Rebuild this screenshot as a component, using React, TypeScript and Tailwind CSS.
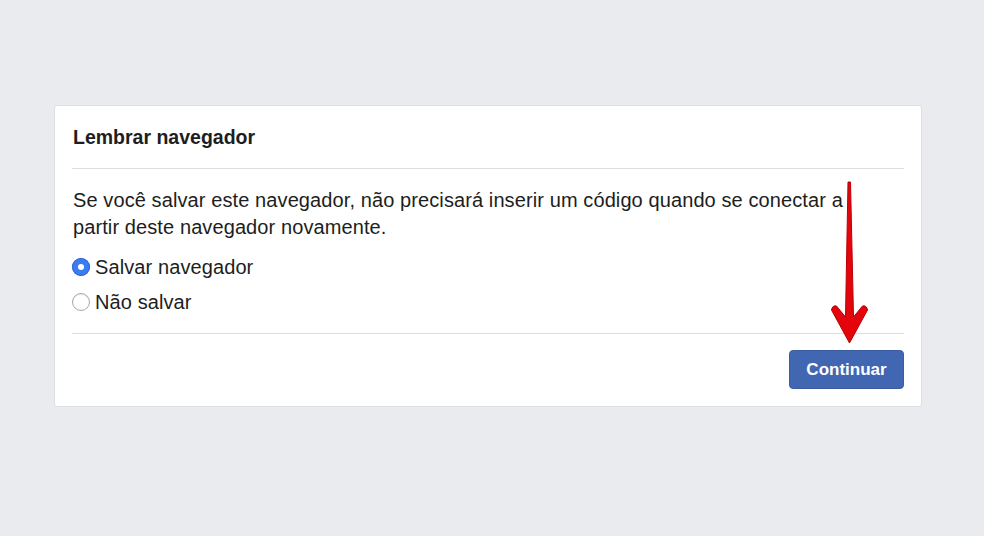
import { useState } from "react";

const font = { fontFamily: '"Liberation Sans", Arial, sans-serif' };

/* ---------------- Radio option ---------------- */
const RadioOption = ({
  label,
  checked,
  onSelect,
}: {
  label: string;
  checked: boolean;
  onSelect: () => void;
}) => (
  <label className="flex items-center gap-[5px] cursor-pointer h-[35px]" onClick={onSelect}>
    {checked ? (
      <span className="w-[18px] h-[18px] rounded-full bg-[#3b7cf0] flex items-center justify-center shadow-[inset_0_0_0_1px_#2f6ad6]">
        <span className="w-[6px] h-[6px] rounded-full bg-white" />
      </span>
    ) : (
      <span className="w-[18px] h-[18px] rounded-full bg-white border border-[#a8a8a8] shadow-[inset_0_1px_1px_rgba(0,0,0,0.08)]" />
    )}
    <span className="text-[20px] tracking-[0.1px] text-[#1c1e21] leading-none">{label}</span>
  </label>
);

/* ---------------- Arrow annotation ---------------- */
const RedArrow = () => (
  <svg
    className="absolute left-[830px] top-[180px] pointer-events-none"
    width="40"
    height="166"
    viewBox="0 0 40 166"
  >
    <path
      d="M18 2 L20.5 2 L23.5 137 L32.5 126 Q36.5 125 37.5 130 L19.5 163 L1.5 130 Q2.5 125 6.5 126 L15.5 137 Z"
      fill="#e3050b"
      stroke="#b80006"
      strokeWidth="1"
      strokeLinejoin="round"
    />
  </svg>
);

export default function App() {
  const [save, setSave] = useState(true);

  return (
    <div className="relative w-[984px] h-[536px] bg-[#e9ebee] pt-[105px] pl-[54px]" style={font}>
      <div className="w-[868px] h-[302px] bg-white border border-[#dddfe2] rounded-[3px] px-[17px]">
        {/* Header */}
        <div className="h-[63px] flex items-center border-b border-[#dadde1] pt-[2px]">
          <h2 className="text-[19.5px] font-bold text-[#1c1e21] pl-[1px]">Lembrar navegador</h2>
        </div>

        {/* Body */}
        <div className="pt-[18px] pb-[14px] border-b border-[#dadde1]">
          <p className="text-[20px] tracking-[0.1px] leading-[27px] text-[#1c1e21] pl-[1px] pr-[40px]">
            Se você salvar este navegador, não precisará inserir um código quando se conectar a partir deste navegador
            novamente.
          </p>
          <div className="mt-[8px]">
            <RadioOption label="Salvar navegador" checked={save} onSelect={() => setSave(true)} />
            <RadioOption label="Não salvar" checked={!save} onSelect={() => setSave(false)} />
          </div>
        </div>

        {/* Footer */}
        <div className="flex justify-end pt-[16px]">
          <button className="w-[115px] h-[39px] rounded-[4px] bg-[#4267b2] border border-[#3b5ea3] text-white text-[17px] font-bold">
            Continuar
          </button>
        </div>
      </div>

      <RedArrow />
    </div>
  );
}
